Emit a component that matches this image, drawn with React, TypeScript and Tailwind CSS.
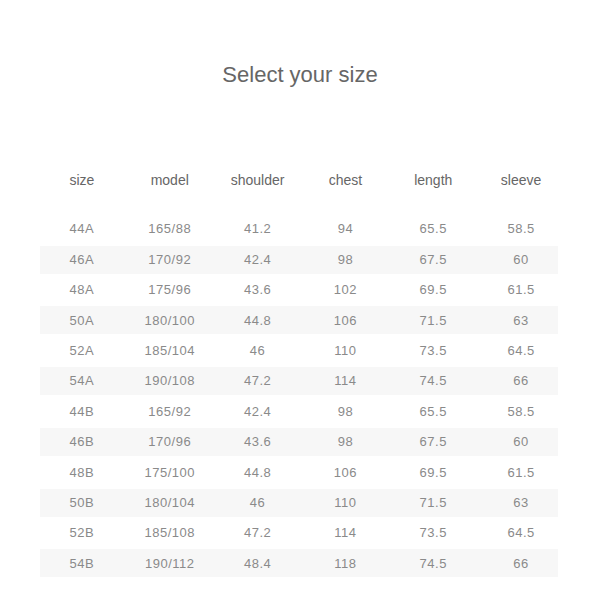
import React from 'react';

const columns = ['size', 'model', 'shoulder', 'chest', 'length', 'sleeve'];

const rows = [
  ['44A', '165/88', '41.2', '94', '65.5', '58.5'],
  ['46A', '170/92', '42.4', '98', '67.5', '60'],
  ['48A', '175/96', '43.6', '102', '69.5', '61.5'],
  ['50A', '180/100', '44.8', '106', '71.5', '63'],
  ['52A', '185/104', '46', '110', '73.5', '64.5'],
  ['54A', '190/108', '47.2', '114', '74.5', '66'],
  ['44B', '165/92', '42.4', '98', '65.5', '58.5'],
  ['46B', '170/96', '43.6', '98', '67.5', '60'],
  ['48B', '175/100', '44.8', '106', '69.5', '61.5'],
  ['50B', '180/104', '46', '110', '71.5', '63'],
  ['52B', '185/108', '47.2', '114', '73.5', '64.5'],
  ['54B', '190/112', '48.4', '118', '74.5', '66'],
];

const App = () => {
  return (
    <div className="w-[600px] h-[600px] bg-white font-['Liberation_Sans',Arial,sans-serif] overflow-hidden">
      <div className="pt-[60px] h-[90px] text-center text-[22px] leading-[30px] text-[#666666]">Select your size</div>

      <div className="mt-[76px] pl-[40px] pr-[42px]">
        <div className="grid grid-cols-6 h-[28px] -ml-[2px] -mr-[7px] items-center text-center text-[14px] text-[#666666]">
          {columns.map((c) => (
            <div key={c}>{c}</div>
          ))}
        </div>

        <div className="mt-[20px]">
          {rows.map((row, i) => (
            <div key={row[0]} className="h-[30.4px] flex items-center">
              <div className={`w-full h-[28px] flex items-center ${i % 2 === 1 ? 'bg-[#f7f7f7]' : ''}`}>
                <div className="flex-1 grid grid-cols-6 -ml-[2px] -mr-[7px] text-center text-[13px] tracking-[0.5px] text-[#8a8a8a]">
                  {row.map((v, j) => (
                    <div key={j}>{v}</div>
                  ))}
                </div>
              </div>
            </div>
          ))}
        </div>
      </div>
    </div>
  );
};

export default App;
